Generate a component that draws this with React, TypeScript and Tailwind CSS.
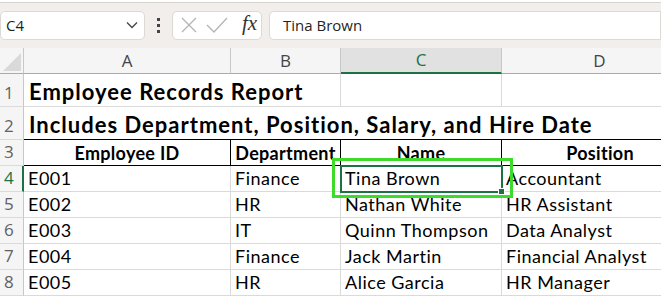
import React from "react";

const cellFont = { fontFamily: "Lato, 'Liberation Sans', sans-serif" };

type Row = { n: number; cells: string[] };

const data: Row[] = [
  { n: 4, cells: ["E001", "Finance", "Tina Brown", "Accountant"] },
  { n: 5, cells: ["E002", "HR", "Nathan White", "HR Assistant"] },
  { n: 6, cells: ["E003", "IT", "Quinn Thompson", "Data Analyst"] },
  { n: 7, cells: ["E004", "Finance", "Jack Martin", "Financial Analyst"] },
  { n: 8, cells: ["E005", "HR", "Alice Garcia", "HR Manager"] },
];

function RowHead({ n, h, active }: { n: number; h: string; active?: boolean }) {
  return (
    <div
      className={`${h} flex items-end justify-start pl-[4px] pb-[1px] bg-[#f5f5f5] border-b border-[#dadada] text-[17px] ${
        active ? "text-[#1e7145] border-r-2 border-r-[#1e7145]" : "text-[#616161] border-r border-r-[#c8c8c8]"
      }`}
      style={{ fontFamily: "'Open Sans', 'Noto Sans', sans-serif" }}
    >
      {n}
    </div>
  );
}

export default function App() {
  return (
    <div className="w-[661px] h-[297px] overflow-hidden bg-white" style={{ fontFamily: "'Open Sans', 'Noto Sans', sans-serif" }}>
      {/* top strip */}
      <div className="h-[3px] bg-white border-b border-[#d6d3cf]" />
      {/* formula bar */}
      <div className="h-[45px] bg-[#f1eeeb] flex items-center pb-[1px]">
        <div className="w-[145px] h-[29px] bg-white border border-[#dcd9d5] rounded-[5px] flex items-center justify-between pl-[5px] pr-[6px]">
          <span className="text-[15px] text-[#1f1f1f]">C4</span>
          <svg width="12" height="8" viewBox="0 0 12 8">
            <path d="M1 1.5 L6 6.5 L11 1.5" fill="none" stroke="#444" strokeWidth="1.3" />
          </svg>
        </div>
        <div className="w-[27px] flex flex-col items-center justify-center gap-[3px]">
          <div className="w-[3px] h-[3px] bg-[#444]" />
          <div className="w-[3px] h-[3px] bg-[#444]" />
          <div className="w-[3px] h-[3px] bg-[#444]" />
        </div>
        <div className="w-[90px] h-[29px] bg-white border border-[#dcd9d5] rounded-[5px] flex items-center pl-[8px]">
          <svg width="16" height="16" viewBox="0 0 16 16">
            <path d="M1 1 L15 15 M15 1 L1 15" stroke="#b4b4b4" strokeWidth="1.3" />
          </svg>
          <svg width="22" height="16" viewBox="0 0 22 16" className="ml-[9px]">
            <path d="M1 8 L8 15 L21 1" fill="none" stroke="#b4b4b4" strokeWidth="1.3" />
          </svg>
          <span
            className="ml-[14px] text-[21px] italic text-[#333] leading-none -mt-[3px]"
            style={{ fontFamily: "'Liberation Serif', 'DejaVu Serif', serif" }}
          >
            fx
          </span>
        </div>
        <div className="ml-[7px] flex-1 h-[29px] bg-white border border-[#dcd9d5] rounded-l-[5px] flex items-center pl-[13px]">
          <span className="text-[15px] text-[#1f1f1f]">Tina Brown</span>
        </div>
      </div>

      {/* grid */}
      <div className="relative">
        <div className="grid grid-cols-[24px_207px_110px_161px_196px]">
          {/* column headers */}
          <div className="h-[26px] bg-[#f5f5f5] border-r border-b border-[#ababab] border-r-[#c8c8c8] flex items-end justify-end p-[2px]">
            <svg width="18" height="18" viewBox="0 0 18 18">
              <path d="M18 0 L18 18 L0 18 Z" fill="#d9d9d9" />
            </svg>
          </div>
          {["A", "B", "C", "D"].map((c) => (
            <div
              key={c}
              className={`h-[26px] flex items-center justify-center text-[17px] border-r border-r-[#c8c8c8] ${
                c === "C"
                  ? "bg-[#e1e1e1] text-[#1e7145] border-b-2 border-b-[#1e7145]"
                  : "bg-[#f5f5f5] text-[#444] border-b border-b-[#ababab]"
              }`}
            >
              {c}
            </div>
          ))}

          {/* row 1 */}
          <RowHead n={1} h="h-[33px]" />
          <div className="h-[33px] border-b border-[#dadada] flex items-end pl-[5px] pb-[1px] whitespace-nowrap font-bold text-[22px] tracking-[1px] text-black" style={cellFont}>
            <span className="translate-y-[3px]">Employee Records Report</span>
          </div>
          <div className="h-[33px] border-b border-r border-[#dadada]" />
          <div className="h-[33px] border-b border-r border-[#dadada]" />
          <div className="h-[33px] border-b border-[#dadada]" />

          {/* row 2 */}
          <RowHead n={2} h="h-[33px]" />
          <div className="h-[33px] border-b border-black flex items-end pl-[5px] pb-[1px] whitespace-nowrap font-bold text-[22px] tracking-[1px] text-black" style={cellFont}>
            <span className="translate-y-[3px]">Includes Department, Position, Salary, and Hire Date</span>
          </div>
          <div className="h-[33px] border-b border-black" />
          <div className="h-[33px] border-b border-black" />
          <div className="h-[33px] border-b border-black" />

          {/* row 3 */}
          <RowHead n={3} h="h-[26px]" />
          {["Employee ID", "Department", "Name", "Position"].map((t, i) => (
            <div
              key={t}
              className={`h-[26px] border-b border-black ${i < 3 ? "border-r border-r-black" : ""} flex items-end justify-center whitespace-nowrap font-bold text-[18px] tracking-[0.3px] text-black`}
              style={cellFont}
            >
              <span className="translate-y-[2px]">{t}</span>
            </div>
          ))}

          {/* data rows */}
          {data.map((r) => (
            <React.Fragment key={r.n}>
              <RowHead n={r.n} h="h-[26px]" active={r.n === 4} />
              {r.cells.map((t, i) => (
                <div
                  key={i}
                  className={`h-[26px] border-b border-[#dadada] ${i < 3 ? "border-r" : ""} flex items-end pl-[4px] whitespace-nowrap text-[18px] tracking-[0.5px] text-black`}
                  style={cellFont}
                >
                  <span className="translate-y-[1px]">{t}</span>
                </div>
              ))}
            </React.Fragment>
          ))}
        </div>

        {/* selection overlays */}
        <div className="absolute left-[340px] top-[117px] w-[163px] h-[28px] border-2 border-[#1e7145]" />
        <div className="absolute left-[499px] top-[141px] w-[5px] h-[5px] bg-[#1e7145] border border-white box-content -translate-x-[1px] -translate-y-[1px]" />
        <div className="absolute left-[332px] top-[110px] w-[181px] h-[40px] border-[3px] border-[#3ddc2a]" />
      </div>
    </div>
  );
}
